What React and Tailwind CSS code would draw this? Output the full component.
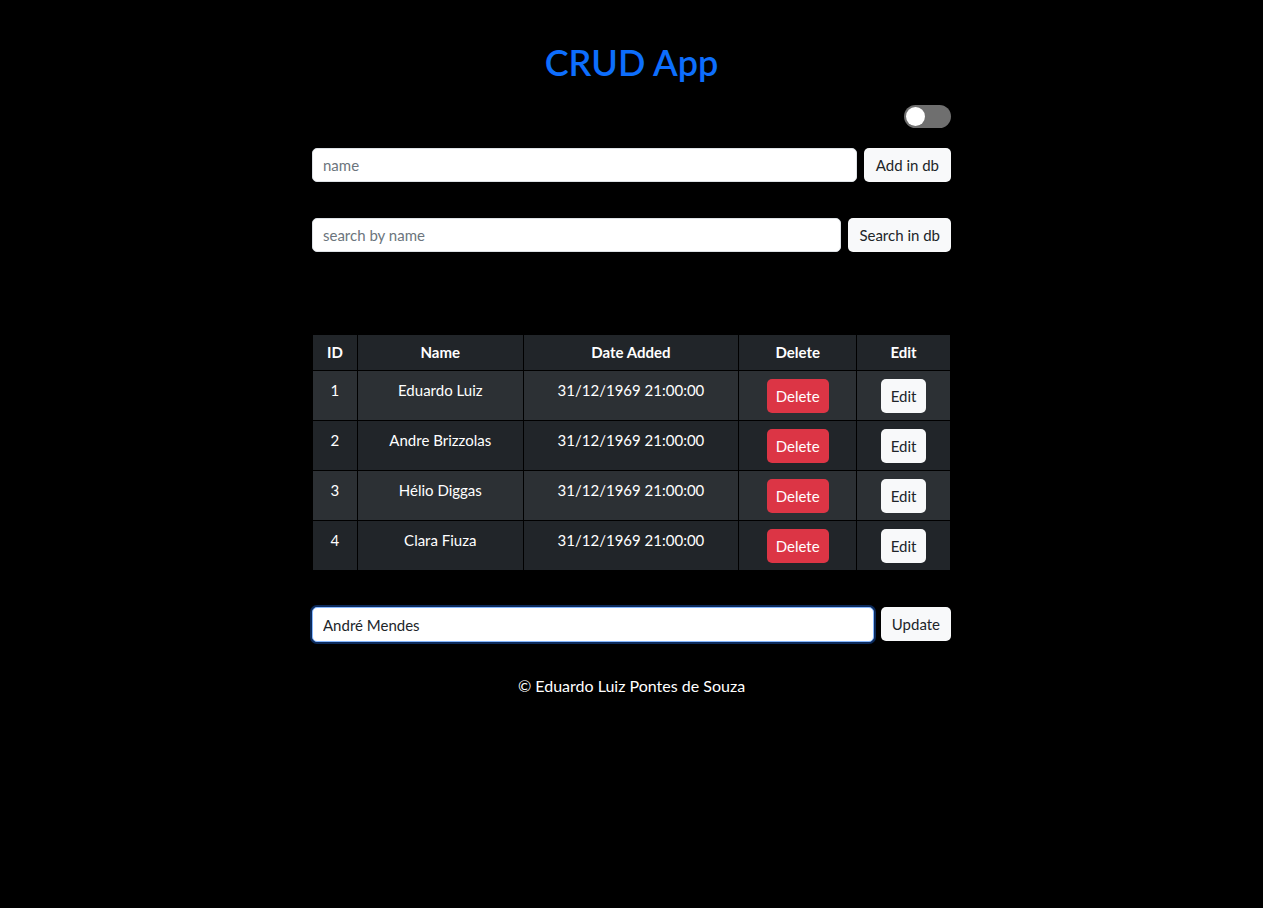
import React, { useState } from 'react';

const rows = [
  { id: 1, name: 'Eduardo Luiz', date: '31/12/1969 21:00:00' },
  { id: 2, name: 'Andre Brizzolas', date: '31/12/1969 21:00:00' },
  { id: 3, name: 'Hélio Diggas', date: '31/12/1969 21:00:00' },
  { id: 4, name: 'Clara Fiuza', date: '31/12/1969 21:00:00' },
];

export default function App() {
  const [name, setName] = useState('');
  const [search, setSearch] = useState('');
  const [edit, setEdit] = useState('André Mendes');

  return (
    <div className="min-h-[908px] bg-black text-white font-['Lato','Noto_Sans',sans-serif]">
      <div className="w-[639px] mx-auto pt-[38px]">
        <h1 className="text-center text-[36px] leading-[48px] font-semibold text-[#0d6efd]">CRUD App</h1>

        {/* dark mode switch */}
        <div className="flex justify-end mt-[19px]">
          <button className="w-[47px] h-[23px] rounded-full bg-[#6f6f6f] flex items-center px-[2px]">
            <span className="block w-[19px] h-[19px] rounded-full bg-white" />
          </button>
        </div>

        <div className="flex gap-[7px] mt-[20px]">
          <input
            value={name}
            onChange={(e) => setName(e.target.value)}
            placeholder="name"
            className="flex-1 h-[34px] rounded-[5px] bg-white border border-[#dee2e6] px-[10px] text-[15px] text-[#212529] placeholder:text-[#6c757d] outline-none"
          />
          <button className="h-[34px] px-[12px] rounded-[5px] bg-[#f8f9fa] text-[15px] text-[#212529]">Add in db</button>
        </div>

        <div className="flex gap-[7px] mt-[36px]">
          <input
            value={search}
            onChange={(e) => setSearch(e.target.value)}
            placeholder="search by name"
            className="flex-1 h-[34px] rounded-[5px] bg-white border border-[#dee2e6] px-[10px] text-[15px] text-[#212529] placeholder:text-[#6c757d] outline-none"
          />
          <button className="h-[34px] px-[11px] rounded-[5px] bg-[#f8f9fa] text-[15px] text-[#212529]">Search in db</button>
        </div>

        <table className="mt-[82px] w-[639px] border-collapse text-[15px] text-center">
          <thead>
            <tr className="bg-[#212529] h-[36px]">
              <th className="w-[45px] border border-black font-bold">ID</th>
              <th className="w-[166px] border border-black font-bold">Name</th>
              <th className="w-[216px] border border-black font-bold">Date Added</th>
              <th className="w-[118px] border border-black font-bold">Delete</th>
              <th className="w-[94px] border border-black font-bold">Edit</th>
            </tr>
          </thead>
          <tbody>
            {rows.map((r, i) => (
              <tr key={r.id} className={i % 2 === 0 ? 'bg-[#2c3034]' : 'bg-[#212529]'}>
                <td className="border border-black align-top pt-[8px] leading-[22px]">{r.id}</td>
                <td className="border border-black align-top pt-[8px] leading-[22px]">{r.name}</td>
                <td className="border border-black align-top pt-[8px] leading-[22px]">{r.date}</td>
                <td className="border border-black pt-[8px] pb-[7px]">
                  <button className="h-[34px] px-[9px] rounded-[5px] bg-[#dc3545] text-white">Delete</button>
                </td>
                <td className="border border-black pt-[8px] pb-[7px]">
                  <button className="h-[34px] px-[10px] rounded-[5px] bg-[#f8f9fa] text-[#212529]">Edit</button>
                </td>
              </tr>
            ))}
          </tbody>
        </table>

        <div className="flex gap-[7px] mt-[36px]">
          <input
            value={edit}
            onChange={(e) => setEdit(e.target.value)}
            className="flex-1 h-[35px] rounded-[5px] bg-white border border-[#86b7fe] shadow-[0_0_0_2px_#0b2a5c] px-[10px] text-[15px] text-[#212529] outline-none"
          />
          <button className="h-[34px] px-[11px] rounded-[5px] bg-[#f8f9fa] text-[15px] text-[#212529]">Update</button>
        </div>

        <p className="text-center text-[16px] mt-[32px]">© Eduardo Luiz Pontes de Souza</p>
      </div>
    </div>
  );
}
